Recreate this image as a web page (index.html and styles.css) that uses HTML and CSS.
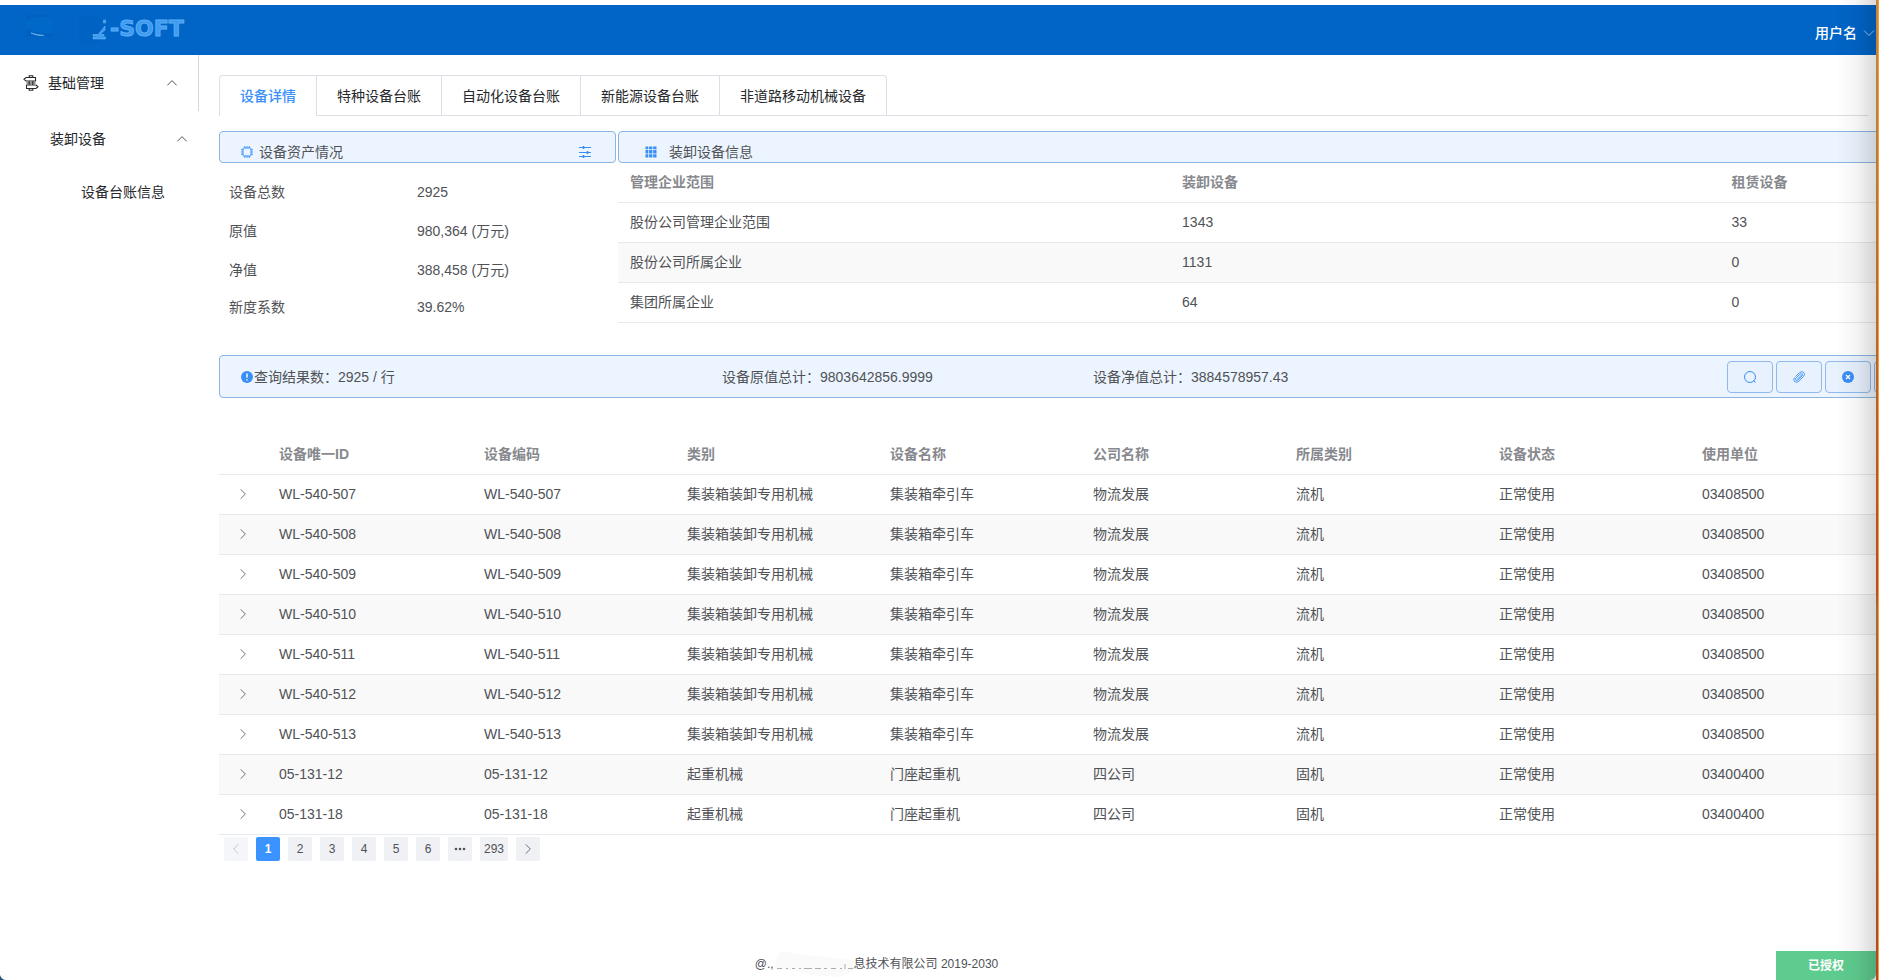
FILE: index.html
```html
<!DOCTYPE html>
<html lang="zh-CN">
<head>
<meta charset="utf-8">
<title>设备台账信息</title>
<link rel="stylesheet" href="styles.css">
</head>
<body>
<svg class="defs" aria-hidden="true">
  <symbol id="chev" viewBox="0 0 12 12"><path d="M4 2 8 6 4 10" fill="none" stroke="currentColor" stroke-width=".7"/></symbol>
</svg>
<div class="page">
  <header class="header">
    <div class="logo">
      <svg class="logo-mark" width="86" height="36" viewBox="0 0 86 36" aria-hidden="true">
        <rect x="2" y="4" width="26" height="22" fill="#0061c1"/><path d="M2 10 12 6H28V22H16L2 18Z" fill="#0068c9"/>
        <path d="M7 22Q13 25 20 24.500Q13 24 7 22Z" fill="#9fd0f8" stroke="#6fb2ee" stroke-width=".7"/>
        <rect x="55" y="4" width="21" height="28" fill="#0062c3"/>
        <path d="M69 23.500H74L81 15V19L76 23.500H80V25H77V26H81.500V28H69V26H73V25H69ZM79.500 12V9H81.500V12Z" fill="#3d9cf2" stroke="#79bdf7" stroke-width=".5"/>
      </svg><span class="logo-text">-SOFT</span>
    </div>
    <button class="user" type="button">用户名
      <svg width="12" height="12" viewBox="0 0 12 12" aria-hidden="true"><path d="M1 3.500 6 8.500 11 3.500" fill="none" stroke="currentColor"/></svg>
    </button>
  </header>
  <div class="body">
    <nav class="side">
      <button type="button" class="item item-1">
        <svg width="16" height="16" viewBox="0 0 16 16" fill="none" stroke="currentColor" stroke-width="1.100" aria-hidden="true"><path d="M6.200 2.300V.700H9.800V2.300M6.200 13.700V15.300H9.800V13.700M3 2.500H12.500V6H3L1 4.250ZM13 10H3.500V13.500H13L15 11.750ZM3.500 8H12.500M6.200 6V10M9.800 6V10"/></svg>
        <span>基础管理</span><svg class="caret up" width="14" height="14"><use href="#chev"/></svg>
      </button>
      <button type="button" class="item item-2"><span>装卸设备</span><svg class="caret up" width="14" height="14"><use href="#chev"/></svg></button>
      <a class="item item-3" href="#">设备台账信息</a>
    </nav>
    <main class="main">
      <div class="tabs" role="tablist">
        <button type="button" role="tab" class="tab active" aria-selected="true">设备详情</button>
        <button type="button" role="tab" class="tab">特种设备台账</button>
        <button type="button" role="tab" class="tab">自动化设备台账</button>
        <button type="button" role="tab" class="tab">新能源设备台账</button>
        <button type="button" role="tab" class="tab">非道路移动机械设备</button>
      </div>
      <div class="wide">
        <div class="overview">
          <section>
            <h2 class="panel-head">
              <svg width="12" height="12" viewBox="0 0 12 12" fill="none" stroke="currentColor" aria-hidden="true"><rect x="2" y="2" width="8" height="8" rx="1"/><path d="M3.500 0V2M5.200 0V2M6.900 0V2M8.500 0V2M3.500 10V12M5.200 10V12M6.900 10V12M8.500 10V12M0 3.500H2M0 5.200H2M0 6.900H2M0 8.500H2M10 3.500H12M10 5.200H12M10 6.900H12M10 8.500H12" stroke-width=".7"/></svg>
              <span>设备资产情况</span>
              <svg class="tail" width="12" height="12" viewBox="0 0 12 12" fill="none" stroke="currentColor" aria-hidden="true"><path d="M0 1.500H12M0 6.500H12M0 10.500H12"/><path d="M4.500 0V3M8.500 5V8M4.500 9V12" stroke-width="1.600"/></svg>
            </h2>
            <dl class="facts">
              <dt>设备总数</dt><dd>2925</dd>
              <dt>原值</dt><dd>980,364 (万元)</dd>
              <dt>净值</dt><dd>388,458 (万元)</dd>
              <dt>新度系数</dt><dd>39.62%</dd>
            </dl>
          </section>
          <section>
            <h2 class="panel-head grid-head">
              <svg width="12" height="12" viewBox="0 0 12 12" fill="currentColor" aria-hidden="true"><path d="M.500 .500H3.300V3.300H.500ZM4.100 .500H7.400V3.300H4.100ZM8.200 .500H11.500V3.300H8.200ZM.500 4.100H3.300V7.400H.500ZM4.100 4.100H7.400V7.400H4.100ZM8.200 4.100H11.500V7.400H8.200ZM.500 8.200H3.300V11.500H.500ZM4.100 8.200H7.400V11.500H4.100ZM8.200 8.200H11.500V11.500H8.200Z"/></svg>
              <span>装卸设备信息</span>
            </h2>
            <table class="table scope">
              <thead><tr><th>管理企业范围</th><th>装卸设备</th><th>租赁设备</th></tr></thead>
              <tbody>
                <tr><td>股份公司管理企业范围</td><td>1343</td><td>33</td></tr>
                <tr><td>股份公司所属企业</td><td>1131</td><td>0</td></tr>
                <tr><td>集团所属企业</td><td>64</td><td>0</td></tr>
              </tbody>
            </table>
          </section>
        </div>
        <div class="summary">
          <svg width="12" height="12" viewBox="0 0 12 12" aria-hidden="true"><circle cx="6" cy="6" r="6" fill="#3a8ff7"/><path d="M6 2.500V6.800M6 8.200V9.600" stroke="#fff" stroke-width="1.400"/></svg>
          <span class="sum-1">查询结果数：2925 / 行</span>
          <span class="sum-2">设备原值总计：9803642856.9999</span>
          <span class="sum-3">设备净值总计：3884578957.43</span>
          <div class="actions">
            <button type="button" aria-label="查询"><svg width="14" height="14" viewBox="0 0 14 14" fill="none" stroke="currentColor"><circle cx="7" cy="7" r="5.500"/><path d="M10.500 10.500 12.500 12.500"/></svg></button>
            <button type="button" aria-label="附件"><svg width="14" height="14" viewBox="0 0 14 14" fill="none" stroke="currentColor" stroke-width=".9"><path d="M3.500 6.500 7.500 2.500Q10 .800 11.800 2.500Q13.400 4.500 11.500 6.500L6.500 11.500Q4.500 13 2.500 11.500Q1 9.500 2.500 7.500M5 9.500 9.800 4.700M3.700 8.300 8 4Q9.500 3 10.300 4Q11 5 10 6L6 10Q4.800 11 3.900 10.200Q3 9.300 3.700 8.300"/></svg></button>
            <button type="button" aria-label="清除"><svg width="14" height="14" viewBox="0 0 14 14"><circle cx="7" cy="7" r="6" fill="currentColor"/><path d="M5 5 9 9M9 5 5 9" stroke="#fff" stroke-width="1.300"/></svg></button>
            <button type="button" aria-label="更多"></button>
          </div>
        </div>
        <table class="table ledger">
          <thead><tr><th></th><th>设备唯一ID</th><th>设备编码</th><th>类别</th><th>设备名称</th><th>公司名称</th><th>所属类别</th><th>设备状态</th><th>使用单位</th></tr></thead>
          <tbody>
            <tr><td><svg class="caret" width="14" height="14"><use href="#chev"/></svg></td><td>WL-540-507</td><td>WL-540-507</td><td>集装箱装卸专用机械</td><td>集装箱牵引车</td><td>物流发展</td><td>流机</td><td>正常使用</td><td>03408500</td></tr>
            <tr><td><svg class="caret" width="14" height="14"><use href="#chev"/></svg></td><td>WL-540-508</td><td>WL-540-508</td><td>集装箱装卸专用机械</td><td>集装箱牵引车</td><td>物流发展</td><td>流机</td><td>正常使用</td><td>03408500</td></tr>
            <tr><td><svg class="caret" width="14" height="14"><use href="#chev"/></svg></td><td>WL-540-509</td><td>WL-540-509</td><td>集装箱装卸专用机械</td><td>集装箱牵引车</td><td>物流发展</td><td>流机</td><td>正常使用</td><td>03408500</td></tr>
            <tr><td><svg class="caret" width="14" height="14"><use href="#chev"/></svg></td><td>WL-540-510</td><td>WL-540-510</td><td>集装箱装卸专用机械</td><td>集装箱牵引车</td><td>物流发展</td><td>流机</td><td>正常使用</td><td>03408500</td></tr>
            <tr><td><svg class="caret" width="14" height="14"><use href="#chev"/></svg></td><td>WL-540-511</td><td>WL-540-511</td><td>集装箱装卸专用机械</td><td>集装箱牵引车</td><td>物流发展</td><td>流机</td><td>正常使用</td><td>03408500</td></tr>
            <tr><td><svg class="caret" width="14" height="14"><use href="#chev"/></svg></td><td>WL-540-512</td><td>WL-540-512</td><td>集装箱装卸专用机械</td><td>集装箱牵引车</td><td>物流发展</td><td>流机</td><td>正常使用</td><td>03408500</td></tr>
            <tr><td><svg class="caret" width="14" height="14"><use href="#chev"/></svg></td><td>WL-540-513</td><td>WL-540-513</td><td>集装箱装卸专用机械</td><td>集装箱牵引车</td><td>物流发展</td><td>流机</td><td>正常使用</td><td>03408500</td></tr>
            <tr><td><svg class="caret" width="14" height="14"><use href="#chev"/></svg></td><td>05-131-12</td><td>05-131-12</td><td>起重机械</td><td>门座起重机</td><td>四公司</td><td>固机</td><td>正常使用</td><td>03400400</td></tr>
            <tr><td><svg class="caret" width="14" height="14"><use href="#chev"/></svg></td><td>05-131-18</td><td>05-131-18</td><td>起重机械</td><td>门座起重机</td><td>四公司</td><td>固机</td><td>正常使用</td><td>03400400</td></tr>
          </tbody>
        </table>
        <nav class="pager" aria-label="分页">
          <button type="button" disabled aria-label="上一页"><svg class="flip" width="14" height="14"><use href="#chev"/></svg></button>
          <button type="button" class="current">1</button>
          <button type="button">2</button><button type="button">3</button><button type="button">4</button><button type="button">5</button><button type="button">6</button>
          <button type="button" aria-label="更多页"><svg width="12" height="12" viewBox="0 0 12 12" fill="currentColor"><circle cx="2" cy="6" r="1.300"/><circle cx="6" cy="6" r="1.300"/><circle cx="10" cy="6" r="1.300"/></svg></button>
          <button type="button">293</button>
          <button type="button" aria-label="下一页"><svg width="14" height="14"><use href="#chev"/></svg></button>
        </nav>
      </div>
      <footer class="footer">
        <span>@.,</span><svg width="80" height="26" viewBox="0 0 80 26" aria-hidden="true"><path d="M6 0 24 3 80 9V20L66 26 38 24 0 16Z" fill="#fafafa"/><path d="M3 17.500H8M12 17.500H14M18 17.500H21M25 17.500H27M30 17.500H38M41 17.500H47M50 17.500H53M57 17.500H62M66 17.500H68M71 13V18M74 17.500H79" stroke="#999" stroke-width=".8"/></svg><span>息技术有限公司 2019-2030</span>
      </footer>
    </main>
  </div>
</div>
<div class="licence">已授权</div>
<div class="edge-shade"></div>
<div class="edge-strip"></div>
<svg class="corner" width="5" height="5" viewBox="0 0 5 5" aria-hidden="true"><path d="M0 0Q1 4 5 5H0Z" fill="#264f7c"/></svg>
</body>
</html>
```
FILE: styles.css
```css
* { box-sizing: border-box; }
body {
  margin: 0;
  font: 14px/20px "Liberation Sans", "Noto Sans CJK SC", sans-serif;
  color: #505256;
  background: #fff;
}
button { font: inherit; color: inherit; background: none; border: 0; padding: 0; cursor: pointer; }
a { color: inherit; text-decoration: none; }
svg { flex: none; display: block; }
.defs { position: absolute; width: 0; height: 0; }

.page { min-height: 100vh; padding: 5px 3px 0 0; display: flex; flex-direction: column; overflow: hidden; }
.header { height: 50px; background: #0065c7; display: flex; align-items: center; justify-content: space-between; padding: 0 1px 0 24px; }
.logo { display: flex; align-items: center; padding-bottom: 3px; }
.logo-text { font: bold 22px/36px "DejaVu Sans", sans-serif; color: #3d9cf2; -webkit-text-stroke: 1px #5cacf5; }
.user { display: flex; align-items: center; gap: 6px; padding-top: 6px; color: #fff; font-weight: 500; }
.user svg { color: #9cc8f2; }

.body { flex: 1; display: flex; }
.side { width: 199px; flex: none; color: #26282b; }
.item { display: flex; align-items: center; width: 100%; height: 56px; text-align: left; }
.item-1 { padding: 0 19px 0 23px; gap: 9px; border-right: 1px solid #d3d9e2; }
.item-2 { padding: 0 10px 0 50px; }
.item-3 { height: 50px; padding-left: 81px; }
.item .caret { margin-left: auto; }
.up { transform: rotate(-90deg); }
.flip { transform: scaleX(-1); }

.main { flex: 1; min-width: 0; padding: 20px 8px 0 20px; display: flex; flex-direction: column; }
.tabs { display: flex; border-bottom: 1px solid #dcdfe6; }
.tab { height: 40px; padding: 0 20px; color: #26282b; border: 1px solid #dcdfe6; border-width: 1px 1px 0 0; }
.tab:first-child { border-left-width: 1px; border-top-left-radius: 4px; }
.tab:last-child { border-top-right-radius: 4px; }
.tab.active { color: #3a8ff7; background: #fff; font-weight: 500; margin-bottom: -1px; height: 41px; }

.wide { margin: 15px -25px 0 0; }
.overview { display: grid; grid-template-columns: 397px 1fr; gap: 2px; height: 224px; }
.panel-head {
  margin: 0; height: 32px; padding: 9px 24px 0 21px; display: flex; align-items: center; gap: 6px;
  font-size: 14px; font-weight: 400; background: #ecf5ff; border: 1px solid #8bb5e0; border-radius: 4px;
}
.panel-head svg { color: #3a8ff7; }
.panel-head .tail { margin-left: auto; }
.grid-head { padding-left: 26px; gap: 12px; }
.facts { margin: 10px 0 0; padding-left: 10px; display: grid; grid-template-columns: 188px 1fr; grid-template-rows: 38px 39px 39px 36px; align-items: center; }
.facts dd { margin: 0; }

.table { width: 100%; border-collapse: collapse; table-layout: fixed; text-align: left; }
.table tr { height: 40px; border-bottom: 1px solid #e6e9f0; }
.table th, .table td { padding: 0 12px; font-weight: 400; white-space: nowrap; }
.table th { color: #87898e; font-weight: 700; }
.table tbody tr:nth-child(even) { background: #f9f9f9; }
.scope thead tr { height: 39px; }
.scope th:nth-child(1) { width: 43.3%; }
.scope th:nth-child(2) { width: 43.1%; }
.ledger { margin-top: 36px; }
.ledger th:first-child { width: 48px; }
.ledger th:nth-child(2) { width: 205px; }
.ledger td:first-child { padding-left: 17px; }

.summary {
  height: 43px; padding-left: 21px; display: flex; align-items: center;
  background: #ecf5ff; border: 1px solid #8bb5e0; border-radius: 4px;
}
.summary svg { margin-right: 1px; }
.sum-1 { width: 468px; }
.sum-2 { width: 371px; }
.sum-3 { flex: 1; white-space: nowrap; }
.actions { display: flex; gap: 3px; width: 165px; overflow: hidden; padding-top: 1px; }
.actions button {
  width: 46px; height: 32px; flex: none; display: flex; align-items: center; justify-content: center;
  color: #3a8ff7; background: #e8f2fe; border: 1px solid #8fb9ec; border-radius: 4px;
}
.actions svg { margin: 0; }
.pager { display: flex; gap: 8px; padding: 2px 5px; }
.pager button {
  min-width: 24px; height: 24px; padding: 0 4px; display: flex; align-items: center; justify-content: center;
  font-size: 12px; background: #f0f1f4; border-radius: 2px;
}
.pager .current { background: #3a93fe; color: #fff; font-weight: 700; }
.pager button:disabled { background: #f4f6f9; color: #b4b9c2; }
.footer { margin-top: auto; padding: 0 334px 3px 0; display: flex; align-items: center; justify-content: center; font-size: 12px; }

.licence {
  position: fixed; right: 3px; bottom: 0; width: 100px; height: 29px; line-height: 30px;
  background: #5fcc8f; color: #fff; font-size: 12px; font-weight: 700; text-align: center; border-bottom-right-radius: 6px;
}
.edge-shade { position: fixed; inset: 0 3px 0 auto; width: 40px; pointer-events: none; background: linear-gradient(to right, transparent, rgba(0,0,0,.04) 50%, rgba(0,0,0,.15)); }
.edge-strip { position: fixed; inset: 0 0 0 auto; width: 3px; background: linear-gradient(#c48a3a, #b9701f 30%, #bb4a1c 60%, #a8692c 62%, #b04a1c); border-right: 1px solid #f79a48; }
.corner { position: fixed; left: 0; bottom: 0; }
```
